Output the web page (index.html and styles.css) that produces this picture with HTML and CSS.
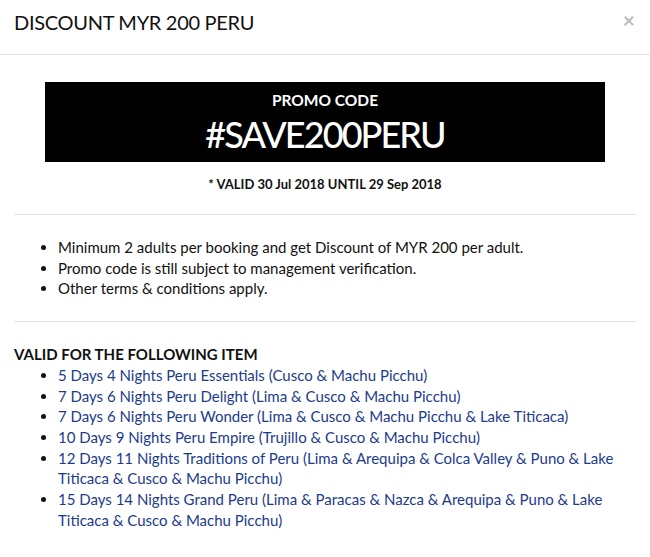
FILE: index.html
```html
<!DOCTYPE html>
<html>
<head>
<meta charset="utf-8">
<link rel="stylesheet" href="styles.css">
</head>
<body>
<div class="modal">
  <div class="modal-header">
    <h4 class="modal-title">DISCOUNT MYR 200 PERU</h4>
    <span class="close">×</span>
  </div>
  <div class="modal-body">
    <div class="promo">
      <div class="promo-label">PROMO CODE</div>
      <div class="promo-code">#SAVE200PERU</div>
    </div>
    <div class="validity">* VALID 30 Jul 2018 UNTIL 29 Sep 2018</div>
    <hr class="sep">
    <ul class="terms">
      <li>Minimum 2 adults per booking and get Discount of MYR 200 per adult.</li>
      <li>Promo code is still subject to management verification.</li>
      <li>Other terms &amp; conditions apply.</li>
    </ul>
    <hr class="sep">
    <div class="items-title">VALID FOR THE FOLLOWING ITEM</div>
    <ul class="items">
      <li><a href="#">5 Days 4 Nights Peru Essentials (Cusco &amp; Machu Picchu)</a></li>
      <li><a href="#">7 Days 6 Nights Peru Delight (Lima &amp; Cusco &amp; Machu Picchu)</a></li>
      <li><a href="#">7 Days 6 Nights Peru Wonder (Lima &amp; Cusco &amp; Machu Picchu &amp; Lake Titicaca)</a></li>
      <li><a href="#">10 Days 9 Nights Peru Empire (Trujillo &amp; Cusco &amp; Machu Picchu)</a></li>
      <li><a href="#">12 Days 11 Nights Traditions of Peru (Lima &amp; Arequipa &amp; Colca Valley &amp; Puno &amp; Lake Titicaca &amp; Cusco &amp; Machu Picchu)</a></li>
      <li><a href="#">15 Days 14 Nights Grand Peru (Lima &amp; Paracas &amp; Nazca &amp; Arequipa &amp; Puno &amp; Lake Titicaca &amp; Cusco &amp; Machu Picchu)</a></li>
    </ul>
  </div>
</div>
</body>
</html>
```

FILE: styles.css
```css
* { box-sizing: border-box; }
html, body { margin: 0; padding: 0; background: #fff; }
body {
  font-family: Lato, "Open Sans", sans-serif;
  font-size: 15px;
  line-height: 20.7px;
  color: #111;
}
.modal { width: 650px; }
.modal-header {
  display: flex;
  justify-content: space-between;
  align-items: flex-start;
  padding: 10px 15px 0 14px;
  height: 55px;
  border-bottom: 1px solid #e0e0e0;
}
.modal-title {
  margin: 0;
  font-size: 20px;
  font-weight: 400;
  line-height: 24px;
  letter-spacing: -0.3px;
  color: #111;
}
.close {
  font-size: 21px;
  font-weight: 700;
  color: #bbb;
  line-height: 21px;
  margin-top: -1px;
}
.modal-body { padding: 27px 14px 0 14px; }
.promo {
  background: #000;
  color: #fff;
  margin: 0 31px;
  height: 80px;
  display: flex;
  flex-direction: column;
  align-items: center;
  padding-top: 8px;
}
.promo-label { font-weight: 700; font-size: 15.5px; line-height: 20px; }
.promo-code {
  font-weight: 500;
  font-size: 36px;
  line-height: 42px;
  letter-spacing: -1.9px;
  margin-top: 3px;
}
.validity {
  text-align: center;
  font-weight: 700;
  font-size: 13px;
  margin-top: 12px;
  line-height: 20px;
}
.sep { border: 0; border-top: 1px solid #e2e2e2; margin: 20px 0 0 0; }
.terms { margin: 22px 0 22px 0; padding-left: 44px; }
.items-title { font-weight: 700; margin-top: 22px; }
.items { margin: 0; padding-left: 44px; }
.items a { color: #1c3b8c; text-decoration: none; }
```
